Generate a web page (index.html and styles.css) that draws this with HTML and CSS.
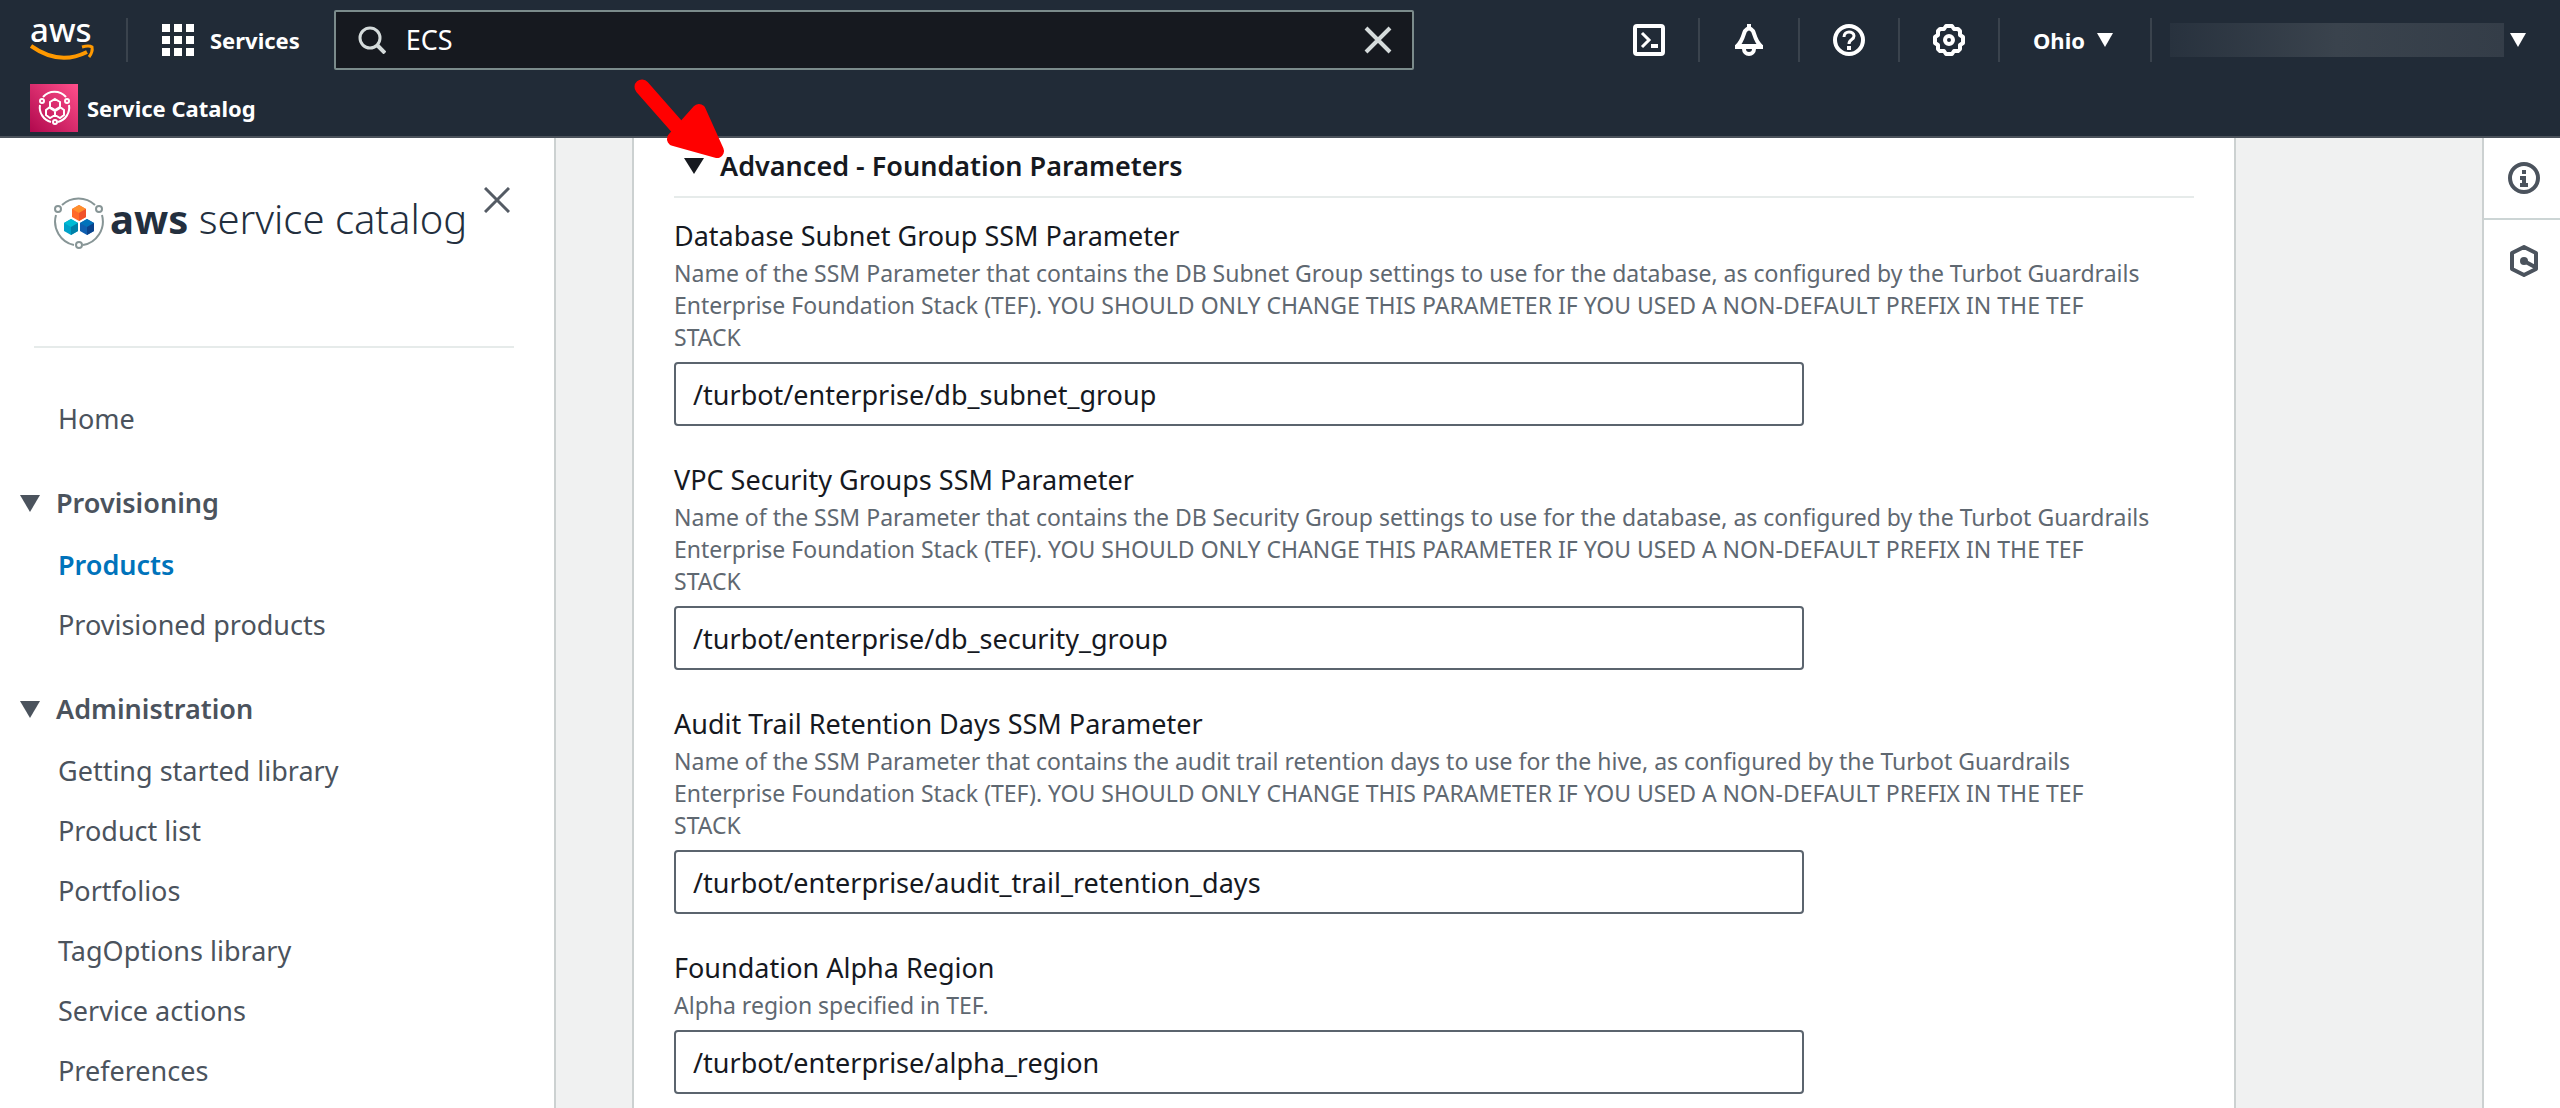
FILE: index.html
```
<!DOCTYPE html>
<html lang="en">
<head>
<meta charset="utf-8">
<title>Service Catalog</title>
<link rel="stylesheet" href="styles.css">
</head>
<body>
<header class="topbar">
  <div class="topbar-main">
    <a class="aws-logo" href="#" aria-label="AWS home">
      <svg width="66" height="64" viewBox="0 -12 66 64">
        <text class="aws-word" x="0" y="22">aws</text>
        <path d="M1 26 Q29 46 57 32" fill="none" stroke="#ff9900" stroke-width="4"/>
        <path d="M52 27 Q59 25 62 27 Q63 32 59 37" fill="none" stroke="#ff9900" stroke-width="3"/>
      </svg>
    </a>
    <button class="services" type="button">
      <svg width="32" height="32" viewBox="0 0 32 32" fill="#fff">
        <path d="M0 0h8v8H0zM12 0h8v8h-8zM24 0h8v8h-8zM0 12h8v8H0zM12 12h8v8h-8zM24 12h8v8h-8zM0 24h8v8H0zM12 24h8v8h-8zM24 24h8v8h-8z"/>
      </svg>
      Services
    </button>
    <form class="search">
      <svg width="28" height="28" viewBox="0 0 28 28" fill="none" stroke="#d5dbdb" stroke-width="3">
        <circle cx="12" cy="12" r="10"/><path d="M19 19l8 8" stroke-width="4"/>
      </svg>
      <input type="text" value="ECS" aria-label="Search services">
      <button type="button" aria-label="Clear search">
        <svg width="28" height="28" viewBox="0 0 28 28" fill="none" stroke="#d5dbdb" stroke-width="4">
          <path d="M2 2l24 24M26 2L2 26"/>
        </svg>
      </button>
    </form>
    <nav class="tools">
      <button class="tool" type="button" aria-label="CloudShell">
        <svg width="32" height="32" viewBox="0 0 32 32" fill="none" stroke="#fff" stroke-width="4">
          <rect x="2" y="2" width="28" height="28" rx="2"/>
          <path d="M9 9l7 7-7 7" stroke-width="3"/><path d="M18 22h7"/>
        </svg>
      </button>
      <button class="tool" type="button" aria-label="Notifications">
        <svg width="32" height="32" viewBox="0 0 32 32" fill="none" stroke="#fff" stroke-width="4" stroke-linejoin="round">
          <path d="M16 0v5M2 23h28" stroke-linecap="butt"/><path d="M4 22C10 17 10 11 12 7Q16 2 20 7C22 11 22 17 28 22Z"/>
          <path d="M11 24v1a5 5 0 0 0 10 0v-1"/>
        </svg>
      </button>
      <button class="tool" type="button" aria-label="Help">
        <svg width="32" height="32" viewBox="0 0 32 32" fill="none" stroke="#fff" stroke-width="4">
          <circle cx="16" cy="16" r="14"/>
          <path d="M11 13c0-7 10-6 10-1c0 4-5 3-5 8" stroke-width="3"/><path d="M16 22v4"/>
        </svg>
      </button>
      <button class="tool" type="button" aria-label="Settings">
        <svg width="32" height="32" viewBox="0 0 32 32" fill="none" stroke="#fff" stroke-width="4" stroke-linejoin="round">
          <path d="M13 2h6l2 3 4 0 2 2 0 4 3 2v6l-3 2 0 4-2 2-4 0-2 3h-6l-2-3-4 0-2-2 0-4-3-2v-6l3-2 0-4 2-2 4 0z"/>
          <circle cx="16" cy="16" r="4"/>
        </svg>
      </button>
      <button class="region" type="button">Ohio
        <svg width="16" height="14" viewBox="0 0 16 14" fill="#fff"><path d="M0 0h16L8 14z"/></svg>
      </button>
      <button class="account" type="button" aria-label="Account">
        <span class="redacted"></span>
        <svg width="16" height="14" viewBox="0 0 16 14" fill="#fff"><path d="M0 0h16L8 14z"/></svg>
      </button>
    </nav>
  </div>
  <div class="favorites">
    <a href="#">
      <svg width="48" height="48" viewBox="0 0 48 48">
        <defs><linearGradient id="pink" x1="0" y1="1" x2="1" y2="0"><stop offset="0" stop-color="#b0084d"/><stop offset="1" stop-color="#ff4f8b"/></linearGradient></defs>
        <rect width="48" height="48" fill="url(#pink)"/>
        <g fill="none" stroke="#fff" stroke-width="2">
          <path d="M13 13a15 15 0 0 1 23 0M39 21a15 15 0 0 1-11 17M21 38A15 15 0 0 1 10 21"/>
          <circle cx="12" cy="17" r="2"/><circle cx="37" cy="17" r="2"/><circle cx="25" cy="38" r="2"/>
          <path d="M25 15l5 3v6l-5 3-5-3v-6zM20 23l5 3v5l-5 3-4-3v-5zM30 23l4 3v5l-4 3-5-3v-5z"/>
        </g>
      </svg>
      Service Catalog
    </a>
  </div>
</header>
<div class="layout">
  <aside class="sidebar">
    <div class="sidebar-head">
      <a class="brand" href="#">
        <svg width="50" height="54" viewBox="0 0 50 54">
          <g fill="none" stroke="#879596" stroke-width="2">
            <path d="M8 8a24 24 0 0 1 33 0M48 18a24 24 0 0 1-19 30M20 48A24 24 0 0 1 2 18"/>
            <circle cx="4" cy="12" r="3"/><circle cx="45" cy="12" r="3"/><circle cx="25" cy="48" r="3"/>
          </g>
          <path d="M25 8l7 4v8l-7 4-7-4v-8z" fill="#ff6a2b"/><path d="M25 8l7 4-7 4-7-4z" fill="#ff8f2e"/><path d="M25 16l7-4v8l-7 4z" fill="#f0522b"/>
          <path d="M17 22l7 4v8l-7 4-7-4v-8z" fill="#00a1c9"/><path d="M17 22l7 4-7 4-7-4z" fill="#00bcd4"/><path d="M17 30l7-4v8l-7 4z" fill="#0080a8"/>
          <path d="M33 22l7 4v8l-7 4-7-4v-8z" fill="#0f5fb0"/><path d="M33 22l7 4-7 4-7-4z" fill="#0073bb"/><path d="M33 30l7-4v8l-7 4z" fill="#0a438c"/>
        </svg>
        <span class="brand-name"><b>aws</b> service catalog</span>
      </a>
      <button type="button" aria-label="Close navigation">
        <svg width="26" height="26" viewBox="0 0 26 26" fill="none" stroke="#545b64" stroke-width="3"><path d="M1 1l24 24M25 1L1 25"/></svg>
      </button>
    </div>
    <hr>
    <nav class="menu">
      <a href="#">Home</a>
      <section>
        <button type="button"><svg width="20" height="17" viewBox="0 0 20 17" fill="#4b535d"><path d="M0 0h20L10 17z"/></svg>Provisioning</button>
        <a class="current" href="#">Products</a>
        <a href="#">Provisioned products</a>
      </section>
      <section>
        <button type="button"><svg width="20" height="17" viewBox="0 0 20 17" fill="#4b535d"><path d="M0 0h20L10 17z"/></svg>Administration</button>
        <a href="#">Getting started library</a>
        <a href="#">Product list</a>
        <a href="#">Portfolios</a>
        <a href="#">TagOptions library</a>
        <a href="#">Service actions</a>
        <a href="#">Preferences</a>
      </section>
    </nav>
  </aside>
  <main class="content">
    <div class="card">
      <h2>
        <button type="button"><svg width="20" height="16" viewBox="0 0 20 16" fill="#16191f"><path d="M0 0h20L10 16z"/></svg>Advanced - Foundation Parameters</button>
        <svg class="pointer" width="100" height="90" viewBox="0 0 100 90" fill="red" stroke="red" stroke-linecap="round" stroke-linejoin="round">
          <path d="M12 13l44 50" stroke-width="15"/><path d="M69 37l18 40-43-12z" stroke-width="14"/>
        </svg>
      </h2>
      <div class="field">
        <label for="subnet">Database Subnet Group SSM Parameter</label>
        <p>Name of the SSM Parameter that contains the DB Subnet Group settings to use for the database, as configured by the Turbot Guardrails Enterprise Foundation Stack (TEF). YOU SHOULD ONLY CHANGE THIS PARAMETER IF YOU USED A NON-DEFAULT PREFIX IN THE TEF STACK</p>
        <input id="subnet" type="text" value="/turbot/enterprise/db_subnet_group">
      </div>
      <div class="field">
        <label for="security">VPC Security Groups SSM Parameter</label>
        <p>Name of the SSM Parameter that contains the DB Security Group settings to use for the database, as configured by the Turbot Guardrails Enterprise Foundation Stack (TEF). YOU SHOULD ONLY CHANGE THIS PARAMETER IF YOU USED A NON-DEFAULT PREFIX IN THE TEF STACK</p>
        <input id="security" type="text" value="/turbot/enterprise/db_security_group">
      </div>
      <div class="field">
        <label for="audit">Audit Trail Retention Days SSM Parameter</label>
        <p>Name of the SSM Parameter that contains the audit trail retention days to use for the hive, as configured by the Turbot Guardrails Enterprise Foundation Stack (TEF). YOU SHOULD ONLY CHANGE THIS PARAMETER IF YOU USED A NON-DEFAULT PREFIX IN THE TEF STACK</p>
        <input id="audit" type="text" value="/turbot/enterprise/audit_trail_retention_days">
      </div>
      <div class="field">
        <label for="alpha">Foundation Alpha Region</label>
        <p>Alpha region specified in TEF.</p>
        <input id="alpha" type="text" value="/turbot/enterprise/alpha_region">
      </div>
    </div>
  </main>
  <aside class="rail">
    <button type="button" aria-label="Info">
      <svg width="32" height="32" viewBox="0 0 32 32" fill="none" stroke="#4b535d" stroke-width="4">
        <circle cx="16" cy="16" r="14"/><path d="M16 8v4M12 16h4v7M12 23h8"/>
      </svg>
    </button>
    <button type="button" aria-label="Resources">
      <svg width="32" height="32" viewBox="0 0 32 32" fill="none" stroke="#4b535d" stroke-width="4" stroke-linejoin="round">
        <path d="M16 2l12 6v16l-12 6-12-6V8z"/><circle cx="16" cy="16" r="4" fill="#4b535d" stroke="none"/><path d="M16 16l11 6" stroke-width="4"/>
      </svg>
    </button>
  </aside>
</div>
</body>
</html>
```
FILE: styles.css
```
* { box-sizing: border-box; }

body {
  display: flex;
  flex-direction: column;
  min-height: 100vh;
  margin: 0;
  background: #f0f1f1;
  color: #16191f;
  font: 27px/36px "Noto Sans", "Open Sans", sans-serif;
}

svg { display: block; flex: none; }
a { color: inherit; text-decoration: none; }

button {
  display: flex;
  align-items: center;
  padding: 0;
  border: 0;
  background: none;
  color: inherit;
  font: inherit;
}

input { font: inherit; color: inherit; }

/* Top bar */
.topbar {
  background: #212b37;
  border-bottom: 2px solid #4b525b;
  color: #fff;
  font-size: 22px;
  font-weight: 700;
}

.topbar-main {
  display: flex;
  align-items: center;
  height: 80px;
  padding-left: 30px;
}

.aws-logo {
  display: flex;
  align-items: center;
  width: 98px;
  height: 44px;
  border-right: 2px solid #3a434d;
}

.aws-word {
  fill: #fff;
  font-size: 33px;
  font-weight: 500;
}

.services {
  gap: 16px;
  margin: 0 34px;
}

.search {
  display: flex;
  flex: 0 1 1080px;
  align-items: center;
  gap: 20px;
  height: 60px;
  padding: 0 20px 0 22px;
  background: #16191f;
  border: 2px solid #7b8b8b;
  border-radius: 2px;
}

.search input {
  flex: 1;
  min-width: 0;
  padding: 0;
  border: 0;
  background: none;
  font-size: 27px;
  font-weight: 400;
}

.tools {
  display: flex;
  align-items: center;
  margin-left: auto;
}

.tool, .region {
  justify-content: center;
  height: 44px;
  border-right: 2px solid #3a434d;
}

.tool { width: 100px; }

.region {
  gap: 12px;
  padding: 0 37px 0 33px;
}

.account {
  gap: 6px;
  padding: 0 34px 0 18px;
}

.redacted {
  width: 334px;
  height: 34px;
  background: linear-gradient(90deg, #28323e, #3a434d 50%, #343d48);
}

.favorites { padding: 4px 30px; }

.favorites a {
  display: inline-flex;
  align-items: center;
  gap: 9px;
  vertical-align: top;
}

/* Page columns */
.layout {
  display: flex;
  flex: 1;
}

.sidebar {
  flex: none;
  width: 556px;
  background: #fff;
  border-right: 2px solid #ccd1d1;
  color: #4b535d;
}

.sidebar-head {
  display: flex;
  align-items: flex-start;
  justify-content: space-between;
  height: 208px;
  padding: 49px 44px 0 54px;
}

.brand {
  display: flex;
  align-items: flex-start;
  gap: 6px;
  padding-top: 10px;
  color: #232f3e;
}

.brand-name {
  font-size: 40px;
  font-weight: 300;
  line-height: 44px;
  white-space: nowrap;
}

.brand-name b { font-weight: 700; }

.sidebar hr {
  height: 2px;
  margin: 0 40px 0 34px;
  border: 0;
  background: #e6ebea;
}

.menu { padding-top: 53px; }
.menu section { margin-top: 48px; }

.menu a {
  display: block;
  margin: 0 0 24px 58px;
}

.menu > a { margin-bottom: 0; }

.menu section a:last-child { margin-bottom: 0; }

.menu button {
  gap: 16px;
  margin: 0 0 26px 20px;
  font-weight: 600;
}

.menu .current {
  color: #0073bb;
  font-weight: 600;
}

.content {
  display: flex;
  flex: 1;
  min-width: 0;
  padding: 0 246px 0 76px;
}

.card {
  flex: 1;
  min-width: 0;
  padding: 10px 40px 12px;
  background: #fff;
  border: solid #ccd1d1;
  border-width: 0 2px;
}

.card h2 {
  position: relative;
  margin: 0 0 20px;
  padding: 0 0 12px 10px;
  border-bottom: 2px solid #e6ebea;
  font-size: 27px;
  font-weight: 600;
}

.card h2 button { gap: 16px; }

/* Callout arrow laid over the heading and the top bar */
.pointer {
  position: absolute;
  top: -74px;
  left: -44px;
}

.field + .field { margin-top: 36px; }
.field label { display: block; }

.field p {
  max-width: 1480px;
  margin: 3px 0 9px;
  color: #5f6871;
  font-size: 23px;
  line-height: 32px;
}

.field input {
  display: block;
  width: 1130px;
  max-width: 100%;
  height: 64px;
  padding: 0 17px;
  border: 2px solid #5b646e;
  border-radius: 4px;
  background: #fff;
}

.rail {
  flex: none;
  width: 78px;
  background: #fff;
  border-left: 2px solid #ccd1d1;
}

.rail button {
  justify-content: center;
  width: 100%;
  height: 80px;
  padding-left: 4px;
}

.rail button + button {
  height: 84px;
  border-top: 2px solid #ccd5d5;
}
```
